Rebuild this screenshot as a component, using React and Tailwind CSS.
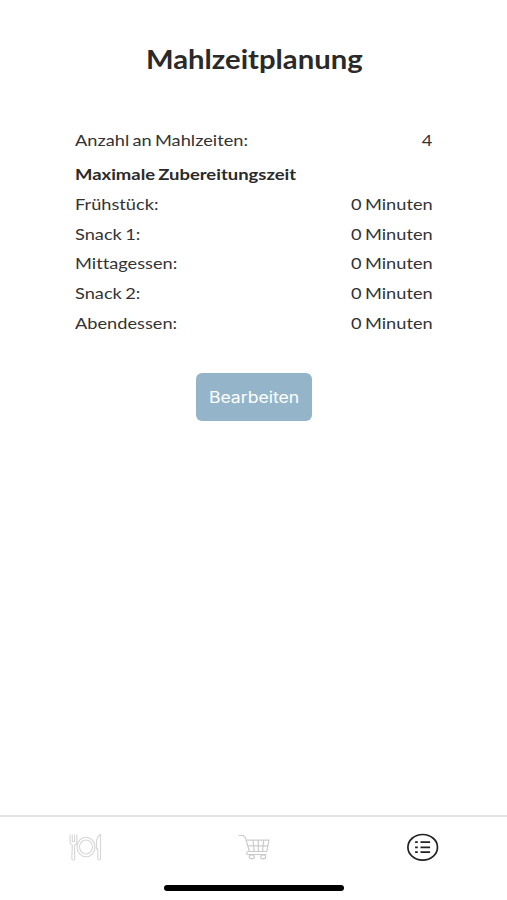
const meals = [
  { name: "Frühstück:", minutes: 0 },
  { name: "Snack 1:", minutes: 0 },
  { name: "Mittagessen:", minutes: 0 },
  { name: "Snack 2:", minutes: 0 },
  { name: "Abendessen:", minutes: 0 },
];

function Row({ label, value }) {
  return (
    <div className="flex justify-between">
      <span className="origin-left scale-x-[1.138]">{label}</span>
      <span className="origin-right scale-x-[1.138]">{value}</span>
    </div>
  );
}

function MealIcon() {
  return (
    <svg width="34" height="28" viewBox="0 0 34 28" fill="none" stroke="#d6d6d6" strokeWidth="1.1">
      {/* Fork */}
      <path d="M2 1.500v7.500q0 2.500 2.300 3.200l-.5 13.300q.1 1.500 1.500 1.500t1.500-1.500L6.300 12.200q2.600-.7 2.600-3.200V1.500M4.300 1.500v7h2.300v-7" />
      {/* Plate */}
      <ellipse cx="18" cy="14" rx="9" ry="9.800" />
      <ellipse cx="18" cy="14" rx="6.500" ry="7" />
      {/* Knife */}
      <path d="M32.500 1.500q-4 2-4 8.500v6h1.300v9.500q.1 1.500 1.300 1.500t1.400-1.500z" />
    </svg>
  );
}

function CartIcon() {
  return (
    <svg width="34" height="28" viewBox="0 0 34 28" fill="none" stroke="#cbcbcb" strokeWidth="1.200">
      <path d="M1.500 2.500H6.500l1.800 2 4.200 14M10 7.200h22L29.700 18.500H13q-3.200 0-3.300 1.500t1.800 1.500H29.500" />
      <path d="M11.300 12.800h19.500M16 7.200l1.200 11.300M21.300 7.200v11.300M26.700 7.200l-1.200 11.300" />
      <ellipse cx="14.800" cy="23.800" rx="2.500" ry="2" />
      <ellipse cx="26.200" cy="23.800" rx="2.500" ry="2" />
    </svg>
  );
}

function ListIcon() {
  return (
    <svg width="34" height="28" viewBox="0 0 34 28" fill="none" stroke="#222">
      <ellipse cx="16.700" cy="14.300" rx="14.800" ry="12.800" strokeWidth="1.700" />
      <path d="M14.500 9.200h9.600M14.500 14.300h9.600M14.500 19.200h9.600" strokeWidth="1.700" />
      <path d="M9.100 9.200h2.700M9.100 14.300h2.700M9.100 19.200h2.700" strokeWidth="1.800" />
    </svg>
  );
}

export default function App() {
  return (
    <div className="flex h-[900px] w-[507px] flex-col bg-white font-['Lato',sans-serif] text-[16px] leading-[30px] text-[#333] [font-variant-ligatures:none] [word-spacing:-1.2px]">
      <main className="flex flex-1 flex-col items-center pt-[38.500px]">
        <h1 className="ml-px scale-x-[1.125] text-[26px] leading-[40px] font-bold text-[#2a2a2a]">
          Mahlzeitplanung
        </h1>

        <section className="mt-[46.500px] w-[358px]">
          <Row label="Anzahl an Mahlzeiten:" value={4} />
          <h2 className="mt-1 flex font-bold text-[#2a2a2a]">
            <span className="origin-left scale-x-[1.153]">Maximale Zubereitungszeit</span>
          </h2>
          <div className="leading-[29.700px]">
            {meals.map((meal) => (
              <Row key={meal.name} label={meal.name} value={`${meal.minutes} Minuten`} />
            ))}
          </div>
        </section>

        <button className="mt-[35.500px] h-[48px] w-[116px] rounded-[6px] bg-[#94b5c9] pl-px font-['Inter',sans-serif] text-[16px] text-white">
          <span className="inline-block scale-x-[1.100]">Bearbeiten</span>
        </button>
      </main>

      <footer className="h-[85px] border-t-2 border-[#e3e3e3]">
        <nav className="grid h-[60px] grid-cols-3 place-items-center">
          <MealIcon />
          <CartIcon />
          <ListIcon />
        </nav>
        <div className="mx-auto mt-[8px] h-[6px] w-[180px] rounded-full bg-black" />
      </footer>
    </div>
  );
}
